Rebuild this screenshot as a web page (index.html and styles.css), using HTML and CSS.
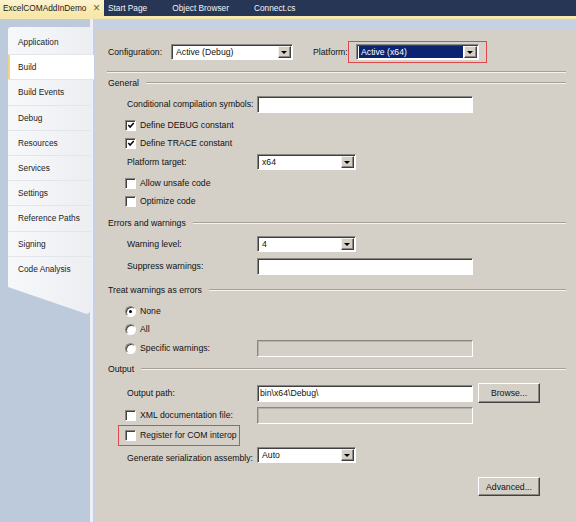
FILE: index.html
```html
<!DOCTYPE html>
<html>
<head>
<meta charset="utf-8">
<link rel="stylesheet" href="styles.css">
</head>
<body>
<div class="tabs">
  <div class="tab active"><span>ExcelCOMAddInDemo</span><span class="close">×</span></div>
  <div class="tab dark">Start Page</div>
  <div class="tab dark">Object Browser</div>
  <div class="tab dark">Connect.cs</div>
</div>
<div class="tabline"></div>
<div class="main">
  <aside class="side">
    <nav class="nav">
      <div class="item">Application</div>
      <div class="item sel">Build</div>
      <div class="item">Build Events</div>
      <div class="item">Debug</div>
      <div class="item">Resources</div>
      <div class="item">Services</div>
      <div class="item">Settings</div>
      <div class="item">Reference Paths</div>
      <div class="item">Signing</div>
      <div class="item last">Code Analysis</div>
    </nav>
    <div class="nav-tail"></div>
  </aside>
  <section class="content">
    <div class="row config">
      <span class="cfg-lbl">Configuration:</span>
      <div class="combo w-cfg"><span class="val">Active (Debug)</span><span class="dd"></span></div>
      <span class="plat-lbl">Platform:</span>
      <div class="redbox plat-box">
        <div class="combo w-plat"><span class="val hl">Active (x64)</span><span class="dd"></span></div>
      </div>
    </div>
    <div class="sep"></div>

    <div class="row hdr m1"><span>General</span><span class="rule"></span></div>
    <div class="row ind m3"><span class="lbl">Conditional compilation symbols:</span><div class="tb"></div></div>
    <div class="row ind m3"><span class="cb"><svg viewBox="0 0 9 9" width="9" height="9"><path d="M1.5 4 L3.5 6.2 L7.6 1.8" fill="none" stroke="#000" stroke-width="1.7"/></svg></span><span class="cbt">Define DEBUG constant</span></div>
    <div class="row ind"><span class="cb"><svg viewBox="0 0 9 9" width="9" height="9"><path d="M1.5 4 L3.5 6.2 L7.6 1.8" fill="none" stroke="#000" stroke-width="1.7"/></svg></span><span class="cbt">Define TRACE constant</span></div>
    <div class="row ind m1"><span class="lbl">Platform target:</span><div class="combo w-sm"><span class="val">x64</span><span class="dd"></span></div></div>
    <div class="row ind m3"><span class="cb"></span><span class="cbt">Allow unsafe code</span></div>
    <div class="row ind"><span class="cb"></span><span class="cbt">Optimize code</span></div>

    <div class="row hdr m4"><span>Errors and warnings</span><span class="rule"></span></div>
    <div class="row ind m3"><span class="lbl">Warning level:</span><div class="combo w-sm"><span class="val">4</span><span class="dd"></span></div></div>
    <div class="row ind m4"><span class="lbl">Suppress warnings:</span><div class="tb"></div></div>

    <div class="row hdr m6"><span>Treat warnings as errors</span><span class="rule"></span></div>
    <div class="row ind m3"><span class="rb on"></span><span class="cbt">None</span></div>
    <div class="row ind"><span class="rb"></span><span class="cbt">All</span></div>
    <div class="row ind m1"><span class="lblc"><span class="rb"></span><span class="cbt">Specific warnings:</span></span><div class="tb dis"></div></div>

    <div class="row hdr m3"><span>Output</span><span class="rule"></span></div>
    <div class="row ind tall m5"><span class="lbl">Output path:</span><div class="tb"><span class="tbv">bin\x64\Debug\</span></div><div class="push browse">Browse...</div></div>
    <div class="row ind m3"><span class="lblc"><span class="cb"></span><span class="cbt">XML documentation file:</span></span><div class="tb dis"></div></div>
    <div class="row reg m2"><div class="redbox reg-box"><span class="cb"></span><span class="cbt">Register for COM interop</span></div></div>
    <div class="row ind gen m3"><span class="lbl low">Generate serialization assembly:</span><div class="combo w-sm"><span class="val">Auto</span><span class="dd"></span></div></div>
    <div class="row adv"><div class="push">Advanced...</div></div>
  </section>
</div>
</body>
</html>
```
FILE: styles.css
```css
html, body {
  margin: 0;
  padding: 0;
}
body {
  width: 576px;
  height: 522px;
  overflow: hidden;
  font-family: "Liberation Sans", Arial, sans-serif;
  background: #c4d0e0;
  color: #1a1a1a;
}

/* ---------- document tabs ---------- */
.tabs {
  display: flex;
  height: 16px;
  background: #263654;
  font-size: 8.3px;
}
.tab {
  display: flex;
  align-items: center;
  box-sizing: border-box;
  height: 16px;
}
.tab.active {
  width: 104px;
  padding-left: 3px;
  background: linear-gradient(#fdf3cf, #f9e6a4);
  color: #1a1a1a;
  justify-content: space-between;
  padding-right: 4px;
}
.tab .close {
  font-size: 12px;
  color: #6d6141;
  line-height: 1;
}
.tab.dark {
  padding: 0 21px 0 4px;
  color: #f2f4f8;
}
.tabline {
  height: 3px;
  background: #f6e8ad;
}

/* ---------- main area ---------- */
.main {
  display: flex;
  height: 503px;
  background: #c6d2e2;
}

.side {
  width: 95px;
  flex: none;
  background: #bccadb;
  box-shadow: inset -2px 0 0 #c9cee2, inset -5px 0 0 #edf0f6;
  padding-top: 8px;
  box-sizing: border-box;
}
.nav {
  margin-left: 8px;
  width: 83px;
  padding-top: 3px;
  padding-bottom: 5px;
  background: linear-gradient(90deg, #f7f8fa, #eceef2);
  font-size: 8.3px;
  border-top-left-radius: 3px;
}
.item {
  height: 25.2px;
  display: flex;
  align-items: center;
  padding-left: 10px;
  box-sizing: border-box;
  border-bottom: 1px solid #e2e5ea;
  color: #1c1c1c;
}
.item.last {
  border-bottom: none;
}
.item.sel {
  background: #ffffff;
  box-shadow: inset 2px 0 0 #f2d584;
  margin-right: -3px;
}
.nav-tail {
  margin-left: 8px;
  width: 82px;
  height: 27px;
  background: linear-gradient(90deg, #f7f8fa, #eceef2);
  clip-path: polygon(0 0, 100% 0, 100% 100%, 96% 100%);
  border-bottom-right-radius: 4px;
}

.content {
  flex: 1;
  margin-top: 10px;
  background: #d4d0c8;
  border-top-left-radius: 4px;
  padding: 14px 10px 0 13px;
  font-size: 8.7px;
  color: #111;
}

.row {
  display: flex;
  align-items: center;
  height: 18px;
}
.row.tall { height: 20px; }
.m1 { margin-top: 1px; }
.m2 { margin-top: 2px; }
.m3 { margin-top: 3px; }
.m4 { margin-top: 4px; }
.m5 { margin-top: 5px; }
.m6 { margin-top: 6px; }

.sep {
  margin-top: 10px;
  height: 0;
  border-top: 1px solid #a3a09a;
  border-bottom: 1px solid #f4f3f0;
  margin-left: -1px;
}

.hdr .rule {
  flex: 1;
  height: 0;
  margin-left: 7px;
  border-top: 1px solid #a3a09a;
  border-bottom: 1px solid #f4f3f0;
}

.ind {
  padding-left: 17px;
}
.lbl {
  width: 130px;
  padding-left: 2px;
  flex: none;
}
.lbl.low {
  padding-top: 6px;
}
.lblc {
  width: 132px;
  flex: none;
  display: flex;
  align-items: center;
}
.cbt {
  margin-left: 4px;
}

/* config row */
.cfg-lbl {
  width: 63px;
  flex: none;
}
.plat-lbl {
  margin-left: 20px;
  width: 35px;
  flex: none;
  white-space: nowrap;
}
.redbox {
  border: 1px solid #e0494c;
  box-sizing: border-box;
  display: flex;
  align-items: center;
}
.plat-box {
  height: 22px;
  padding: 0 7px;
  flex: none;
}

/* combobox */
.combo {
  display: flex;
  box-sizing: border-box;
  height: 16px;
  background: #fff;
  border: 1px solid;
  border-color: #8a8780 #ffffff #ffffff #8a8780;
  box-shadow: inset 1px 1px 0 #404040;
  padding: 1px 1px 1px 1px;
  flex: none;
}
.w-cfg { width: 122px; }
.w-plat { width: 123px; }
.w-sm { width: 99px; }
.combo .val {
  flex: 1;
  padding-left: 2px;
  line-height: 12px;
  margin-left: 1px;
}
.combo .val.hl {
  background: #0b2472;
  color: #fff;
  margin-right: 1px;
}
.combo .dd {
  width: 13px;
  flex: none;
  box-sizing: border-box;
  background: #d4d0c8;
  border: 1px solid;
  border-color: #f4f3ef #404040 #404040 #f4f3ef;
  box-shadow: inset -1px -1px 0 #8a8780;
  display: flex;
  align-items: center;
  justify-content: center;
}
.combo .dd::after {
  content: "";
  width: 0;
  height: 0;
  border-left: 3px solid transparent;
  border-right: 3px solid transparent;
  border-top: 3px solid #000;
  margin-left: -1px;
  margin-top: 1px;
}

/* textbox */
.tb {
  width: 216px;
  height: 17px;
  flex: none;
  box-sizing: border-box;
  background: #fff;
  border: 1px solid;
  border-color: #8a8780 #ffffff #ffffff #8a8780;
  box-shadow: inset 1px 1px 0 #404040;
  display: flex;
  align-items: center;
}
.tb.dis {
  background: #d4d0c8;
  box-shadow: inset 1px 1px 0 #b5b2ab;
}
.tbv {
  padding-left: 2px;
}

/* checkbox / radio */
.cb {
  width: 11px;
  height: 11px;
  flex: none;
  box-sizing: border-box;
  background: #fff;
  border: 1px solid;
  border-color: #8a8780 #ffffff #ffffff #8a8780;
  box-shadow: inset 1px 1px 0 #404040;
  display: flex;
  align-items: center;
  justify-content: center;
}
.cb svg {
  display: block;
  margin: 1px 0 0 1px;
}
.rb {
  width: 11px;
  height: 11px;
  flex: none;
  box-sizing: border-box;
  border-radius: 50%;
  background: #fff;
  border: 1px solid;
  border-color: #8a8780 #ffffff #ffffff #8a8780;
  box-shadow: inset 1px 1px 0 #404040;
  display: flex;
  align-items: center;
  justify-content: center;
}
.rb.on::after {
  content: "";
  width: 3px;
  height: 3px;
  border-radius: 50%;
  background: #000;
}

/* buttons */
.push {
  width: 62px;
  height: 20px;
  flex: none;
  box-sizing: border-box;
  background: #d4d0c8;
  border: 1px solid;
  border-color: #ffffff #404040 #404040 #ffffff;
  box-shadow: inset -1px -1px 0 #8a8780;
  display: flex;
  align-items: center;
  justify-content: center;
}
.browse {
  margin-left: 5px;
}

/* register row */
.reg {
  padding-left: 10px;
}
.reg-box {
  height: 21px;
  width: 122px;
  padding-left: 6px;
}

.gen {
  height: 16px;
}
.adv {
  margin-top: 14px;
  padding-left: 370px;
  height: 19px;
}
.adv .push {
  height: 19px;
}
```
